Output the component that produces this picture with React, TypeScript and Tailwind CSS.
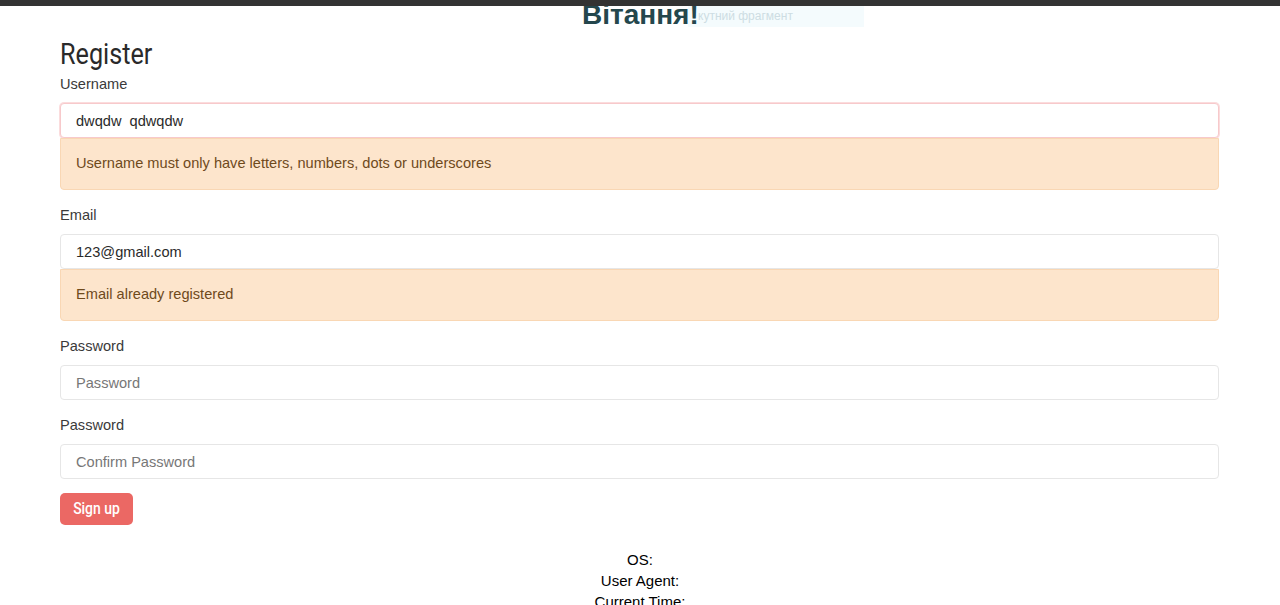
import React from 'react';

const narrow = "font-['Roboto',sans-serif]";

function Field({ label, value, placeholder, focused, error }: { label: string; value?: string; placeholder?: string; focused?: boolean; error?: string }) {
  return (
    <div className="mb-[14px]">
      <label className="block text-[14.6px] leading-[22px] text-[#3a3a3a] mb-[8px]">{label}</label>
      <input
        readOnly
        defaultValue={value}
        placeholder={placeholder}
        className={`block w-full h-[35px] px-[15px] text-[14.6px] text-[#2a2a2a] placeholder:text-[#777] bg-white rounded-[4px] border outline-none ${
          focused ? 'border-[#f7c9cb] shadow-[0_0_0_1px_#fbdcdd]' : 'border-[#e6e6e6]'
        }`}
      />
      {error && (
        <div className="h-[52px] flex items-center px-[15px] text-[14.6px] text-[#6f4a1c] bg-[#fde5cc] border border-[#f9d7b4] rounded-b-[4px]">
          {error}
        </div>
      )}
    </div>
  );
}

export default function App() {
  return (
    <div className="min-h-screen bg-white font-['Liberation_Sans',Arial,sans-serif]">
      <div className="h-[6px] bg-[#333] relative z-10" />
      <div className="relative h-[21px]">
        <div className="absolute left-[688px] top-0 w-[176px] h-[21px] bg-[#f4fbfd] text-[12px] text-[#cddde3] pl-[10px] leading-[21px]">
          кутний фрагмент
        </div>
        <h1 className="absolute left-[582px] top-[-8px] text-[28px] leading-[34px] font-bold text-[#24474d]">
          Вітання!
        </h1>
      </div>
      <div className="pl-[60px] pr-[61px]">
        <h2 className={`${narrow} text-[30px] leading-[34px] text-[#2a2a2a] mt-[10px] mb-[2px]`}>
          <span className="inline-block origin-left scale-x-[0.84]">Register</span>
        </h2>
        <Field label="Username" value="dwqdw  qdwqdw" focused error="Username must only have letters, numbers, dots or underscores" />
        <Field label="Email" value="123@gmail.com" error="Email already registered" />
        <Field label="Password" placeholder="Password" />
        <Field label="Password" placeholder="Confirm Password" />
        <button className={`${narrow} mt-[2px] h-[32px] w-[73px] rounded-[5px] bg-[#eb6864] text-white text-[17px] font-medium flex items-center justify-center`}>
          <span className="inline-block scale-x-[0.82]">Sign up</span>
        </button>
      </div>
      <div className="text-center text-[15px] leading-[21px] text-black mt-[24px]">
        <div>OS:</div>
        <div>User Agent:</div>
        <div>Current Time:</div>
      </div>
    </div>
  );
}
